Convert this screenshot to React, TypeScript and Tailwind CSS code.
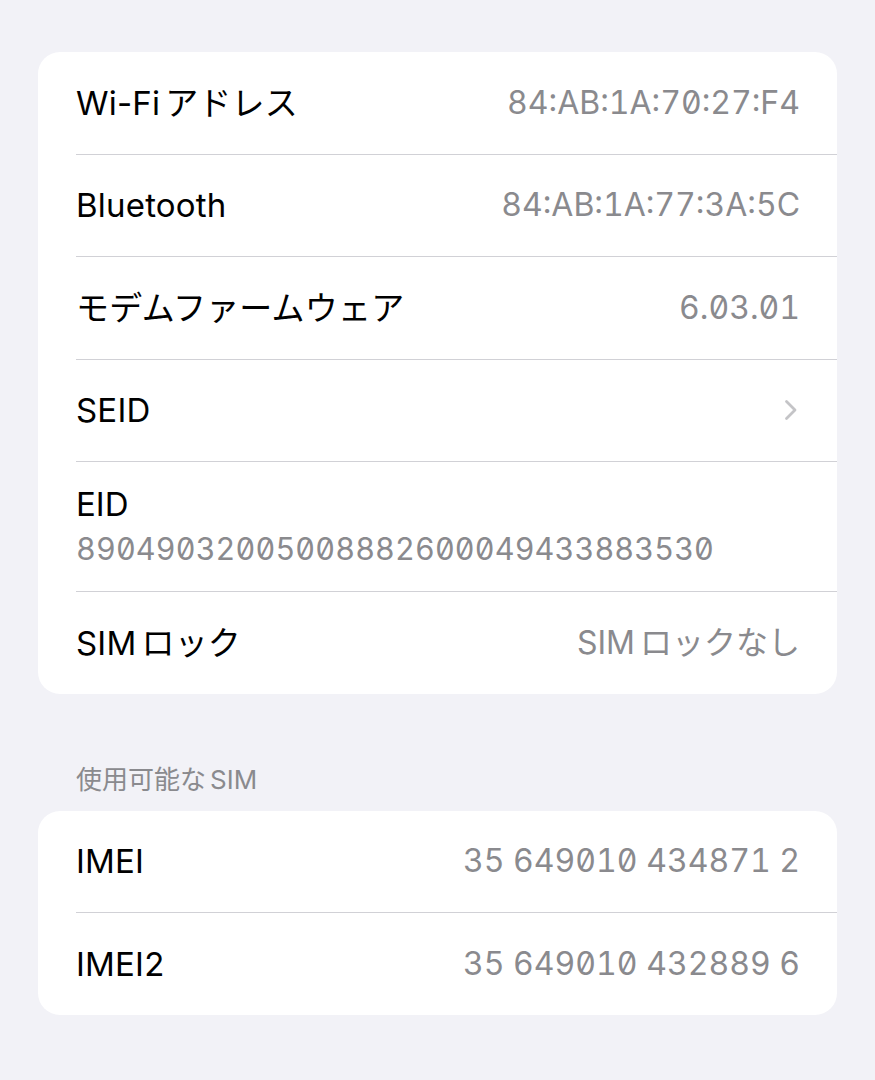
const baseFont = "font-['Inter','Noto_Sans_CJK_JP',sans-serif]";

type Row = { label: string; value?: string; chevron?: boolean; stacked?: boolean };

const infoRows: Row[] = [
  { label: "Wi-Fiアドレス", value: "84:AB:1A:70:27:F4" },
  { label: "Bluetooth", value: "84:AB:1A:77:3A:5C" },
  { label: "モデムファームウェア", value: "6.03.01" },
  { label: "SEID", chevron: true },
  { label: "EID", value: "89049032005008882600049433883530", stacked: true },
  { label: "SIMロック", value: "SIMロックなし" },
];

const simRows: Row[] = [
  { label: "IMEI", value: "35 649010 434871 2" },
  { label: "IMEI2", value: "35 649010 432889 6" },
];

// iOS puts a little air between latin and kana, split the string to mimic it
function Mixed({ text }: { text: string }) {
  const m = text.match(/^([A-Za-z\-]+)(.+)$/);
  if (!m || !/[\u3040-\u30ff\u4e00-\u9fff]/.test(m[2][0])) return <>{text}</>;
  return (
    <>
      {m[1]}
      <span className="ml-[5px]">{m[2]}</span>
    </>
  );
}

function MixedTail({ text }: { text: string }) {
  const m = text.match(/^(.*[\u3040-\u30ff\u4e00-\u9fff])([A-Za-z]+)$/);
  if (!m) return <Mixed text={text} />;
  return (
    <>
      {m[1]}
      <span className="ml-[4px]">{m[2]}</span>
    </>
  );
}

function Chevron() {
  return (
    <svg width="15" height="22" viewBox="0 0 15 22" fill="none">
      <path d="M3.5 2.5l8.5 8.5-8.5 8.5" stroke="#c4c4c7" strokeWidth="2.8" strokeLinecap="round" strokeLinejoin="round" />
    </svg>
  );
}

const numCls = "text-[#8a8a8e] [font-feature-settings:'tnum','zero']";

function ListRow({ row }: { row: Row }) {
  if (row.stacked) {
    return (
      <div className="h-[129px] flex flex-col justify-center pl-[38px] pr-[37px]">
        <div className="text-[33px] leading-[40px] text-black">{row.label}</div>
        <div className={`mt-[5px] text-[30.6px] leading-[40px] tracking-[0.1px] ${numCls}`}>{row.value}</div>
      </div>
    );
  }
  return (
    <div className="h-[101.5px] flex items-center justify-between pl-[38px] pr-[37px]">
      <span className="text-[33px] leading-[40px] tracking-[0.2px] text-black">
        <Mixed text={row.label} />
      </span>
      {row.chevron ? (
        <span className="mr-[2px] flex"><Chevron /></span>
      ) : (
        <span className={`text-[32px] leading-[40px] ${numCls}`}>
          <Mixed text={row.value ?? ""} />
        </span>
      )}
    </div>
  );
}

function Card({ rows }: { rows: Row[] }) {
  return (
    <div className="bg-white rounded-[22px] overflow-hidden">
      {rows.map((row, i) => (
        <div key={row.label}>
          {i > 0 && <div className="ml-[38px] h-px bg-[#d1d1d6]" />}
          <ListRow row={row} />
        </div>
      ))}
    </div>
  );
}

export default function App() {
  return (
    <div className={`min-h-screen bg-[#f2f2f7] pt-[52px] px-[38px] ${baseFont}`}>
      <Card rows={infoRows} />
      <div className="mt-[70px] mb-[15px] pl-[38px] text-[26px] leading-[32px] text-[#8a8a8e]">
        <MixedTail text="使用可能なSIM" />
      </div>
      <Card rows={simRows} />
    </div>
  );
}
